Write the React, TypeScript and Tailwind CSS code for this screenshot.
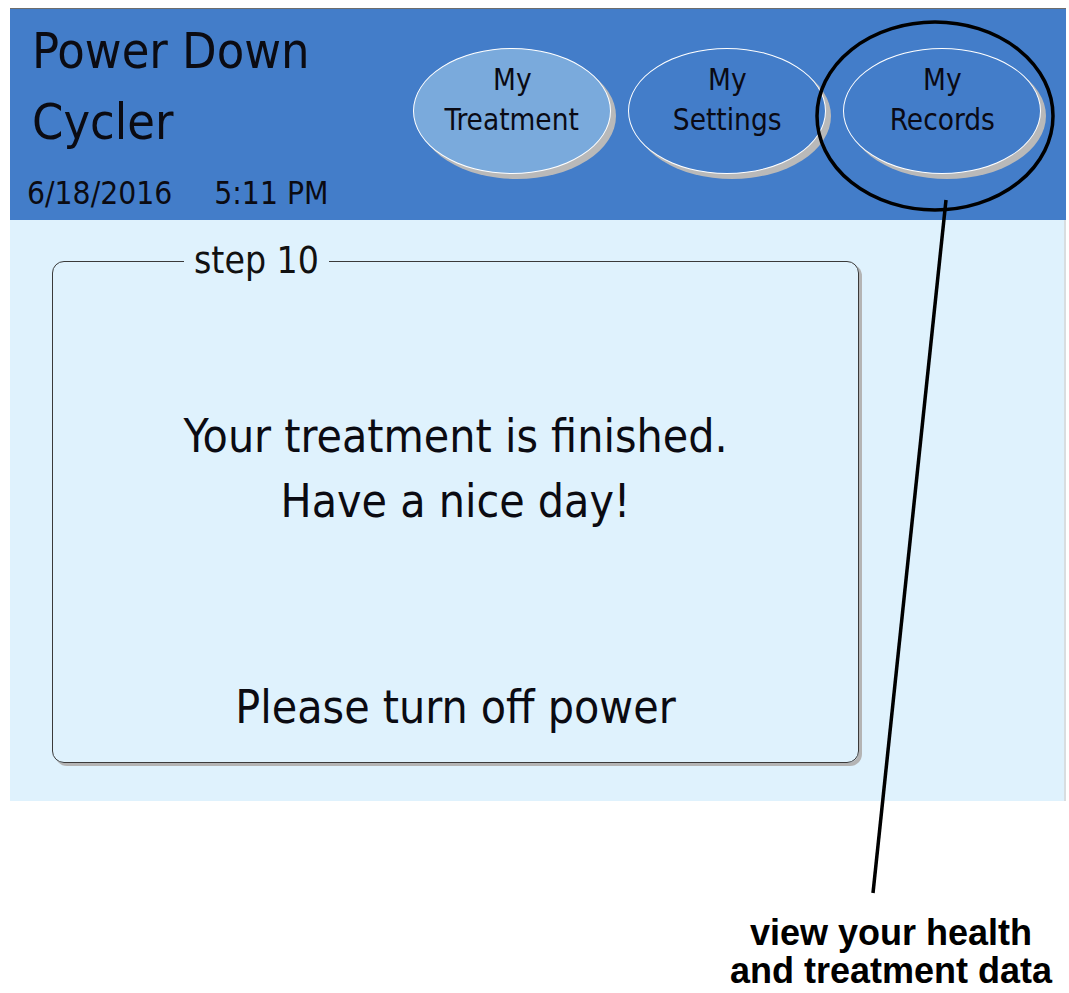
const font = { fontFamily: '"DejaVu Sans Condensed", "Liberation Sans Narrow", Roboto, sans-serif' };

const NavButton = ({ top, bottom, active }: { top: string; bottom: string; active?: boolean }) => (
    <div
        className={`flex flex-col items-center justify-center w-[198px] h-[126px] rounded-[50%] border border-white shadow-[5px_5px_0_#b9b9b9] ${active ? "bg-[#7aaadc]" : "bg-[#437dc9]"}`}
    >
        <span className="text-[31px] leading-[40px] text-[#0a0a14] -mt-[24px] scale-x-[0.95]">{top}</span>
        <span className="text-[31px] leading-[40px] text-[#0a0a14] scale-x-[0.95]">{bottom}</span>
    </div>
);

export default function App() {
    return (
        <div className="relative w-[1069px] h-[993px] bg-white overflow-hidden" style={font}>
            <div className="ml-[10px] mt-[8px] w-[1056px] border-t border-[#6d6d6d]">
                {/* header */}
                <div className="flex flex-row justify-between h-[211px] bg-[#437dc9]">
                    <div className="flex flex-col pl-[22px] pt-[7px]">
                        <span className="text-[50px] leading-[71px] text-[#0b0b12]">Power Down</span>
                        <span className="text-[50px] leading-[71px] text-[#0b0b12]">Cycler</span>
                        <span className="text-[31.5px] leading-[40px] text-[#0b0b12] -ml-[5px] mt-[15px] flex flex-row gap-[42px]">
                            <span>6/18/2016</span>
                            <span>5:11 PM</span>
                        </span>
                    </div>
                    <div className="flex flex-row gap-[17px] pt-[39px] pr-[25px]">
                        <NavButton top="My" bottom="Treatment" active />
                        <NavButton top="My" bottom="Settings" />
                        <NavButton top="My" bottom="Records" />
                    </div>
                </div>
                {/* body */}
                <div className="h-[581px] bg-[#dff2fd] border-r-2 border-[#d8dde0] pt-[21px] pl-[42px]">
                    <fieldset className="w-[807px] h-[522px] border-[1.5px] border-[#3a3a3a] rounded-[12px] shadow-[3px_3px_0_#b4b4b4] flex flex-col items-center">
                        <legend className="ml-[131px] px-[10px] text-[37px] leading-[40px] text-[#111]">step 10</legend>
                        <div className="flex flex-col items-center mt-[123px] text-[46px] leading-[65px] text-[#0b0b12]">
                            <span>Your treatment is finished.</span>
                            <span>Have a nice day!</span>
                        </div>
                        <span className="mt-[141px] text-[46px] leading-[65px] text-[#0b0b12]">Please turn off power</span>
                    </fieldset>
                </div>
            </div>
            {/* annotation */}
            <div className="flex flex-row justify-end pr-[17px] pt-[113px]">
                <div className="flex flex-col items-center text-[36px] leading-[38px] font-bold text-black" style={{ fontFamily: '"Liberation Sans", Arial, sans-serif' }}>
                    <span>view your health</span>
                    <span>and treatment data</span>
                </div>
            </div>
            <svg className="absolute left-0 top-0" width="1069" height="993">
                <ellipse cx="935" cy="116" rx="118" ry="94" fill="none" stroke="#000" strokeWidth="3.5" />
                <line x1="946" y1="200" x2="873" y2="893" stroke="#000" strokeWidth="3.5" />
            </svg>
        </div>
    );
}
